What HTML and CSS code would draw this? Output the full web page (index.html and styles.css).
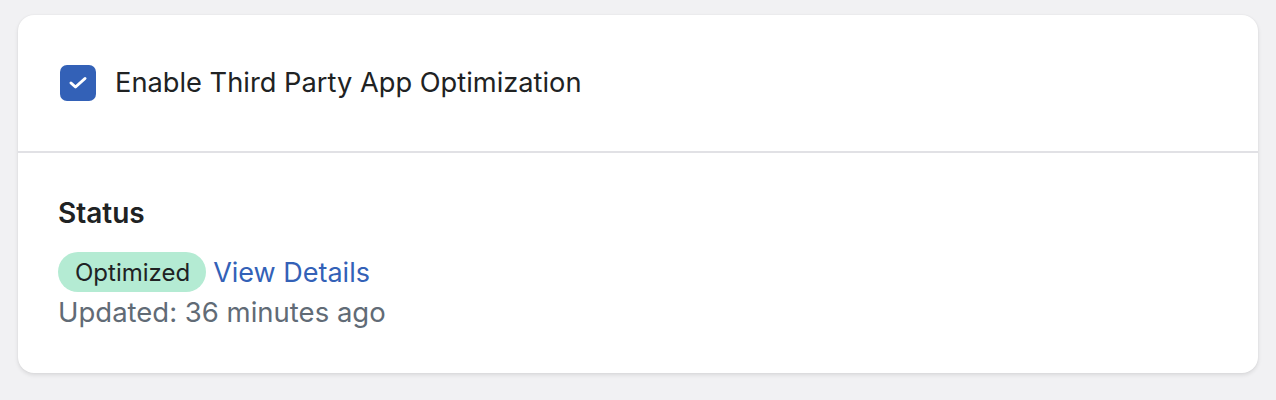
FILE: index.html
```html
<!DOCTYPE html>
<html>
<head>
<meta charset="utf-8">
<link rel="stylesheet" href="styles.css">
</head>
<body>
<div class="card">
  <div class="section top">
    <label class="check-row">
      <span class="checkbox">
        <svg viewBox="0 0 36 36" width="36" height="36"><path d="M11 18l4.5 4 9.5-8.5" fill="none" stroke="#fff" stroke-width="3" stroke-linecap="round" stroke-linejoin="round"/></svg>
      </span>
      <span class="check-label">Enable Third Party App Optimization</span>
    </label>
  </div>
  <div class="divider"></div>
  <div class="section bottom">
    <h2 class="heading">Status</h2>
    <div class="status-row">
      <span class="badge">Optimized</span>
      <a class="link" href="#">View Details</a>
    </div>
    <div class="updated">Updated: 36 minutes ago</div>
  </div>
</div>
</body>
</html>
```
FILE: styles.css
```css
html, body {
  margin: 0;
  padding: 0;
  background: #f1f1f3;
}
body {
  padding: 15px 18px;
  font-family: Inter, "Noto Sans", sans-serif;
  color: #202223;
}
.card {
  background: #fff;
  border-radius: 16px;
  box-shadow: 0 2px 4px rgba(0,0,0,0.10), 0 0 2px rgba(0,0,0,0.06);
  overflow: hidden;
}
.section.top {
  padding: 50px 42px;
}
.check-row {
  display: flex;
  align-items: center;
  gap: 19px;
}
.checkbox {
  width: 36px;
  height: 36px;
  border-radius: 7px;
  background: #3361b7;
  display: flex;
  align-items: center;
  justify-content: center;
  flex: none;
}
.checkbox svg {
  display: block;
}
.check-label {
  font-size: 27.25px;
  line-height: 36px;
  color: #202223;
}
.divider {
  height: 2px;
  background: #e1e1e5;
}
.section.bottom {
  padding: 44px 40px 41px;
}
.heading {
  margin: 0;
  font-size: 28px;
  font-weight: 600;
  line-height: 32px;
}
.status-row {
  margin-top: 23px;
  display: flex;
  align-items: center;
  gap: 7px;
}
.badge {
  background: #b4ebd3;
  border-radius: 20px;
  height: 40px;
  padding: 0 16px 0 17px;
  display: flex;
  align-items: center;
  font-size: 24px;
  color: #202223;
}
.link {
  color: #3361b7;
  font-size: 27px;
  text-decoration: none;
}
.updated {
  font-size: 27.5px;
  line-height: 40px;
  color: #616b76;
}
```
